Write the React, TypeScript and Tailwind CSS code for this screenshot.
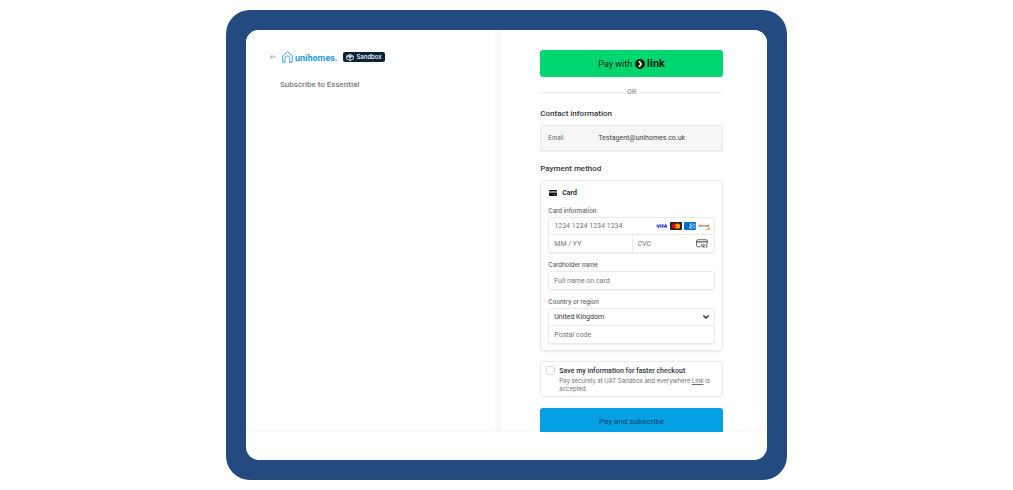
import type { ReactNode } from 'react';

const fieldText =
  'w-full min-w-0 bg-transparent px-[5px] font-[Roboto,sans-serif] text-[7px] leading-[10px] text-[#30313d] outline-none placeholder:text-[#757680] placeholder:opacity-100';

const fieldLabel = 'mb-px block text-[6px] leading-[10px] font-medium text-[#5c5d66]';

function HouseLogo() {
  return (
    <svg viewBox="0 0 22 24" className="h-3 w-[11px]" fill="none" stroke="#2f9bdc" strokeWidth="1.8" strokeLinecap="round" strokeLinejoin="round" aria-hidden="true">
      <path d="M5.5 22.5H1.5V9.5L11 1.5L20.5 9.5V22.5H16" />
      <path d="M6 22.5V14.5C6 8.5 15.5 8.5 15.5 14.5V22.5" />
    </svg>
  );
}

function BackArrow() {
  return (
    <svg viewBox="0 0 12 12" className="size-1.5" fill="none" stroke="#a3a5aa" strokeWidth="1.8" aria-hidden="true">
      <path d="M12 6H1M5.5 1.5L1 6L5.5 10.5" />
    </svg>
  );
}

function BoxIcon() {
  return (
    <svg viewBox="0 0 18 16" className="h-[7px] w-2" fill="none" stroke="#fff" strokeWidth="1.8" strokeLinejoin="round" aria-hidden="true">
      <path d="M9 1L16.5 4.5V11.5L9 15L1.5 11.5V4.5Z" />
      <path d="M1.5 4.5L9 8L16.5 4.5M9 8V15M5 3L12.5 6.5M13 3L5.5 6.5" />
    </svg>
  );
}

function LinkMark() {
  return (
    <svg viewBox="0 0 20 20" className="size-[10px]" aria-hidden="true">
      <circle cx="10" cy="10" r="10" fill="#011e0f" />
      <path d="M6.8 4H10.6C11.2 6.7 13 9 15.6 10C13 11 11.2 13.3 10.6 16H6.8C7.4 13.3 8.9 11.2 10.8 10C8.9 8.8 7.4 6.7 6.8 4Z" fill="#d9f8e8" />
    </svg>
  );
}

function CardBrands() {
  return (
    <div className="flex shrink-0 gap-0.5 pr-1" aria-hidden="true">
      <svg viewBox="0 0 24 16" className="h-2 w-3">
        <rect x=".4" y=".4" width="23.2" height="15.2" rx="2" fill="#fff" stroke="#e8e8f2" strokeWidth=".8" />
        <g fill="none" stroke="#2437d8" strokeWidth="2.2">
          <path d="M2 5L4.6 11L7.4 5M9.8 5L9 11.2M15.2 5.8C12.8 5 11.8 6.4 13.2 7.6C15.2 8.8 14.6 11 11.6 10.2M16.2 11.2L19.4 5.4L21.6 11.2M17.5 9.5H20.5" />
        </g>
      </svg>
      <svg viewBox="0 0 24 16" className="h-2 w-3">
        <rect width="24" height="16" rx="2" fill="#252525" />
        <circle cx="8.8" cy="8" r="5.2" fill="#eb001b" />
        <circle cx="15.2" cy="8" r="5.2" fill="#f79e1b" />
        <path d="M12 3.9A5.2 5.2 0 0 1 12 12.1A5.2 5.2 0 0 1 12 3.9Z" fill="#ff5f00" />
      </svg>
      <svg viewBox="0 0 24 16" className="h-2 w-3">
        <rect width="24" height="16" rx="2" fill="#016fd0" />
        <path d="M17 3.5H12.5V7H17M12.5 5.2H16.5M17.5 3.5L23.5 7M23.5 3.5L17.5 7M11 9H16M11 12.8H16M11 9V12.8M11 10.9H15.5M17 9L23.5 12.8M23.5 9L17 12.8" fill="none" stroke="#fff" strokeWidth=".9" />
      </svg>
      <svg viewBox="0 0 24 16" className="h-2 w-3">
        <rect x=".4" y=".4" width="23.2" height="15.2" rx="2" fill="#fff" stroke="#ececf0" strokeWidth=".8" />
        <path d="M23.6 11C20.5 13.4 18 14.6 14.5 15.6H22C23 15.6 23.6 15 23.6 14Z" fill="#f27712" />
        <path d="M2 6V9.4H3.4C5.5 9.4 5.5 6 3.4 6ZM6.5 6V9.6M9.6 6.2C7 6 7.3 7.6 8.6 7.8C10 8.2 9.5 9.8 7.8 9.2M13 6.3C10.5 5.6 10.5 9.9 13 9.2M16.8 6L18 9.4L19.2 6M22 6H20.3V9.4H22M20.3 7.7H22" fill="none" stroke="#51434b" strokeWidth="1" />
        <circle cx="15" cy="7.7" r="1.8" fill="#f27712" />
      </svg>
    </div>
  );
}

function CvcIcon() {
  return (
    <svg viewBox="0 0 24 18" className="mr-1.5 h-[9px] w-3 shrink-0" fill="none" stroke="#30313d" aria-hidden="true">
      <path d="M9 15.5H3.5C2 15.5 1.2 14.7 1.2 13.3V3.7C1.2 2.3 2 1.5 3.5 1.5H20.5C22 1.5 22.8 2.3 22.8 3.7V9" strokeWidth="1.5" />
      <path d="M1.2 5.8H22.8" strokeWidth="2" />
      <path d="M10.5 11.5L12 10.8V16.5M14 11.3C15.5 10 17.6 11.3 16.2 13.3L14.2 16H17.4M19 11.2C20.7 10.2 22.6 11.4 21.4 13C23.4 14 22 17 19 15.8" strokeWidth="1.7" />
    </svg>
  );
}

function FieldGroup({ children }: { children: ReactNode }) {
  return <div className="rounded-[3px] border border-[#ebebeb] bg-white shadow-[0_1px_1px_rgba(0,0,0,0.06)]">{children}</div>;
}

function Heading({ children }: { children: ReactNode }) {
  return <h2 className="font-[Roboto,sans-serif] text-[8px] leading-[10px] font-medium text-[#35363a]">{children}</h2>;
}

function Summary() {
  return (
    <section className="w-[49%] shrink-0 bg-[linear-gradient(to_left,#f7f7f7,transparent_8px)] pt-5 pl-6">
      <div className="flex h-[14px] items-center">
        <a href="#back" aria-label="Back" className="flex items-center gap-1.5">
          <BackArrow />
          <HouseLogo />
        </a>
        <span className="pt-0.5 pl-0.5 font-[Roboto,sans-serif] text-[9px] leading-3 font-bold text-[#239bdb]">unihomes.</span>
        <span className="ml-1.5 flex h-[10px] items-center gap-0.5 rounded-xs bg-[#0b2239] px-[3px] text-[6px] leading-[10px] font-medium text-white">
          <BoxIcon />
          Sandbox
        </span>
      </div>
      <h1 className="mt-4 pl-[10px] font-[Roboto,sans-serif] text-[8px] leading-[10px] font-medium text-[#7a7a7a]">Subscribe to Essential</h1>
    </section>
  );
}

function CardPanel() {
  return (
    <div className="mt-1.5 rounded-[4px] border border-[#e9e9e9] px-[7px] pt-[7px] pb-1.5 shadow-[0_1px_2px_rgba(0,0,0,0.08)]">
      <div className="flex items-center gap-[5px] pl-px font-[Roboto,sans-serif] text-[7px] leading-[10px] font-bold text-[#30313d]">
        <svg viewBox="0 0 16 12" className="h-1.5 w-2" aria-hidden="true">
          <path d="M0 2C0 .8.8 0 2 0H14C15.2 0 16 .8 16 2V3H0ZM0 5H16V10C16 11.2 15.2 12 14 12H2C.8 12 0 11.2 0 10Z" fill="#111" />
          <path d="M10 9H13" stroke="#fff" />
        </svg>
        Card
      </div>
      <fieldset className="mt-2">
        <legend className={fieldLabel}>Card information</legend>
        <FieldGroup>
          <div className="flex h-[17px] items-center border-b border-[#ebebeb]">
            <input aria-label="Card number" placeholder="1234 1234 1234 1234" inputMode="numeric" className={fieldText} />
            <CardBrands />
          </div>
          <div className="grid h-[17px] grid-cols-2">
            <input aria-label="Expiry date" placeholder="MM / YY" className={fieldText} />
            <div className="flex items-center border-l border-[#ebebeb]">
              <input aria-label="Security code" placeholder="CVC" className={fieldText} />
              <CvcIcon />
            </div>
          </div>
        </FieldGroup>
      </fieldset>
      <label htmlFor="holder" className={`mt-[7px] ${fieldLabel}`}>Cardholder name</label>
      <FieldGroup>
        <div className="flex h-[17px] items-center">
          <input id="holder" placeholder="Full name on card" className={fieldText} />
        </div>
      </FieldGroup>
      <label htmlFor="country" className={`mt-[7px] ${fieldLabel}`}>Country or region</label>
      <FieldGroup>
        <div className="relative flex h-[17px] items-center border-b border-[#ebebeb]">
          <select id="country" className={`${fieldText} appearance-none`}>
            <option>United Kingdom</option>
          </select>
          <svg viewBox="0 0 12 8" className="pointer-events-none absolute right-[5px] h-1 w-1.5" fill="none" stroke="#1f2026" strokeWidth="2.4" strokeLinecap="round" strokeLinejoin="round" aria-hidden="true">
            <path d="M1.5 1.5L6 6L10.5 1.5" />
          </svg>
        </div>
        <div className="flex h-[17px] items-center">
          <input aria-label="Postal code" placeholder="Postal code" className={fieldText} />
        </div>
      </FieldGroup>
    </div>
  );
}

function Checkout() {
  return (
    <form className="min-w-0 flex-1 pt-5 pr-11 pl-[39px]">
      <button type="button" className="flex h-[27px] w-full items-center justify-center gap-[3px] rounded-[3px] bg-[#00d66f] font-[Roboto,sans-serif] text-[9px] leading-3 text-[#011e0f]">
        Pay with
        <span className="flex items-center gap-0.5 text-[11px] leading-3 font-bold">
          <LinkMark />
          link
        </span>
      </button>
      <div className="mt-[10px] flex items-center gap-1 font-[Roboto,sans-serif] text-[7px] leading-[10px] text-[#7b7b7b]">
        <span className="h-px flex-1 bg-[#efefef]" />
        OR
        <span className="h-px flex-1 bg-[#efefef]" />
      </div>
      <div className="mt-3">
        <Heading>Contact information</Heading>
      </div>
      <dl className="mt-1.5 flex h-[26px] items-center rounded-[3px] border border-[#e9e9e9] bg-[#f6f6f6] pl-[7px] shadow-[0_1px_1px_rgba(0,0,0,0.07)]">
        <dt className="w-[50px] text-[6px] leading-[10px] text-[#5f6068]">Email</dt>
        <dd className="font-[Roboto,sans-serif] text-[7px] leading-[10px] text-[#3f4046]">Testagent@unihomes.co.uk</dd>
      </dl>
      <div className="mt-[13px]">
        <Heading>Payment method</Heading>
      </div>
      <CardPanel />
      <div className="mt-[10px] flex gap-1 rounded-[3px] border border-[#ebebeb] pt-1 pb-[3px] pl-[5px] shadow-[0_1px_1px_rgba(0,0,0,0.05)]">
        <input id="save" type="checkbox" className="size-[9px] shrink-0 appearance-none rounded-xs border border-[#dcdcdc] bg-white" />
        <div>
          <label htmlFor="save" className="block font-[Roboto,sans-serif] text-[7px] leading-[10px] font-medium text-[#30313d]">Save my information for faster checkout</label>
          <p className="mt-px text-[6px] leading-2 text-[#6d6e78]">
            Pay securely at UAT Sandbox and everywhere <a href="#link" className="underline">Link</a> is
            <br />
            accepted.
          </p>
        </div>
      </div>
      <button type="submit" className="mt-[11px] h-[27px] w-full rounded-[3px] bg-[#05a0e3] font-[Roboto,sans-serif] text-[8px] leading-[10px] font-medium text-[#07527a]">Pay and subscribe</button>
    </form>
  );
}

export default function App() {
  return (
    <main className="bg-white py-[10px] font-['Inter',sans-serif]">
      <div className="mx-auto max-w-[561px] rounded-[24px] bg-[#234b80] p-5">
        <div className="overflow-hidden rounded-[13px] bg-white pb-7">
          <div className="flex h-[402px] overflow-hidden bg-[linear-gradient(to_top,#fafafa,#ffffff_5px)]">
            <Summary />
            <Checkout />
          </div>
        </div>
      </div>
    </main>
  );
}
